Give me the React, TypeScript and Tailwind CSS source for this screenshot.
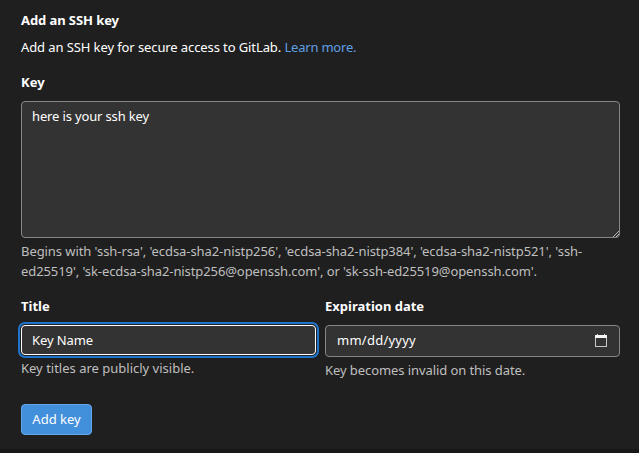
import type { ReactNode } from "react";

function Label({ id, children }: { id: string; children: ReactNode }) {
  return (
    <label htmlFor={id} className="block h-5 text-[13px] leading-5 font-bold text-white">
      {children}
    </label>
  );
}

function CalendarIcon() {
  return (
    <svg width="12" height="13" viewBox="0 0 12 13" shapeRendering="crispEdges" aria-hidden="true">
      <path d="M2 0h1v1H2zM9 0h1v1H9z" fill="#dddddd" />
      <path d="M0 1h12v3H0z" fill="#f4f4f4" />
      <path d="M0 4h1v8H0zM11 4h1v8h-1zM0 12h12v1H0z" fill="#c8c8c8" />
    </svg>
  );
}

export default function App() {
  return (
    <main className="flex h-[453px] w-[639px] flex-col bg-[#1f1f1f] font-['Noto_Sans',sans-serif] text-[13px] leading-5 text-white">
      <form className="flex-1 pt-[10px] pr-[19px] pl-[21px]">
        <h1 className="h-5 font-bold tracking-[-0.08px] whitespace-nowrap">Add an SSH key</h1>
        <p className="mt-[7px] h-5 whitespace-nowrap">
          <span className="tracking-[-0.1px]">Add an SSH key for secure access to GitLab. </span>
          <a className="tracking-[-0.2px] text-[#5f9fe3]">Learn more.</a>
        </p>
        <div className="mt-[15px]">
          <Label id="key">Key</Label>
          <div className="relative mt-[9px] h-[137px]">
            <textarea
              id="key"
              className="block h-full w-full resize-none rounded-[4px] border border-[#868686] bg-[#333333] px-[10px] py-[4px] tracking-[-0.15px] outline-none"
              defaultValue="here is your ssh key"
            />
            <svg className="absolute right-[1px] bottom-[1px]" width="6" height="6" viewBox="0 0 6 6" aria-hidden="true">
              <path d="M0 6L6 0M3 6L6 3" stroke="#dddddd" strokeWidth="0.8" />
            </svg>
          </div>
          <p className="mt-[3px] whitespace-nowrap text-[#bfbfbf]">
            <span className="tracking-[-0.075px]">Begins with 'ssh-rsa', 'ecdsa-sha2-nistp256', 'ecdsa-sha2-nistp384', 'ecdsa-sha2-nistp521', 'ssh-</span>
            <br />
            <span className="tracking-[-0.09px]">ed25519', 'sk-ecdsa-sha2-nistp256@openssh.com', or 'sk-ssh-ed25519@openssh.com'.</span>
          </p>
        </div>
        <div className="mt-[15px] grid grid-cols-2 gap-[9px]">
          <div>
            <Label id="title">Title</Label>
            <input
              id="title"
              className="mt-[9px] block h-[30px] w-full rounded-[4px] border border-white bg-[#333333] px-[10px] tracking-[-0.1px] outline-2 outline-offset-1 outline-[#1f75cb]"
              defaultValue="Key Name"
            />
            <p className="mt-[3px] whitespace-nowrap text-[#bfbfbf]">Key titles are publicly visible.</p>
          </div>
          <div>
            <Label id="expires">Expiration date</Label>
            <div id="expires" className="mt-[9px] flex h-8 items-center justify-between rounded-[4px] border border-[#868686] bg-[#333333] pr-[12px] pb-[2px] pl-[11px]">
              <span className="tracking-[0.25px]">mm/dd/yyyy</span>
              <CalendarIcon />
            </div>
            <p className="mt-[3px] tracking-[-0.08px] whitespace-nowrap text-[#bfbfbf]">Key becomes invalid on this date.</p>
          </div>
        </div>
        <button type="button" className="mt-[24px] flex h-[31px] w-[71px] items-center justify-center rounded-[4px] border border-[#63a6e9] bg-[#428fdc] pb-[2px] whitespace-nowrap">
          Add key
        </button>
      </form>
      <div className="h-1 bg-[#1a1718]" />
    </main>
  );
}
